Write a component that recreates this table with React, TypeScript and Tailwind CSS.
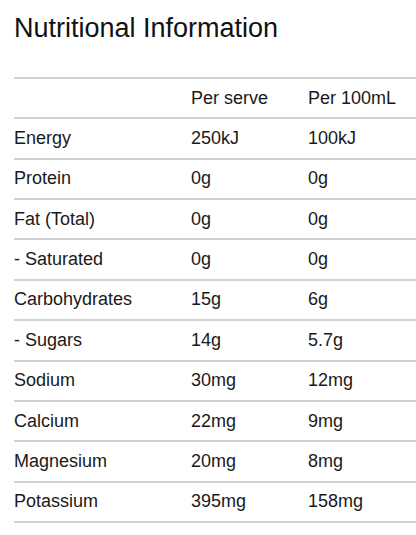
const rows: [string, string, string][] = [
  ["", "Per serve", "Per 100mL"],
  ["Energy", "250kJ", "100kJ"],
  ["Protein", "0g", "0g"],
  ["Fat (Total)", "0g", "0g"],
  ["- Saturated", "0g", "0g"],
  ["Carbohydrates", "15g", "6g"],
  ["- Sugars", "14g", "5.7g"],
  ["Sodium", "30mg", "12mg"],
  ["Calcium", "22mg", "9mg"],
  ["Magnesium", "20mg", "8mg"],
  ["Potassium", "395mg", "158mg"],
];

export default function App() {
  return (
    <div className="min-h-screen bg-white pl-[14px] text-[#111] font-['Liberation_Sans',Arial,sans-serif]">
      <h1 className="pt-[13px] text-[27px] leading-[31px] font-normal text-[#111]">Nutritional Information</h1>
      <div className="mt-[33px] border-t-2 border-[#d2d2d2]">
        {rows.map(([name, serve, per100], i) => (
          <div
            key={i}
            className="grid h-[40.36px] grid-cols-[177px_117px_1fr] items-center border-b-2 border-[#d2d2d2] text-[18px] leading-[21px] text-[#1a1a1a]"
          >
            <div>{name}</div>
            <div>{serve}</div>
            <div>{per100}</div>
          </div>
        ))}
      </div>
    </div>
  );
}
